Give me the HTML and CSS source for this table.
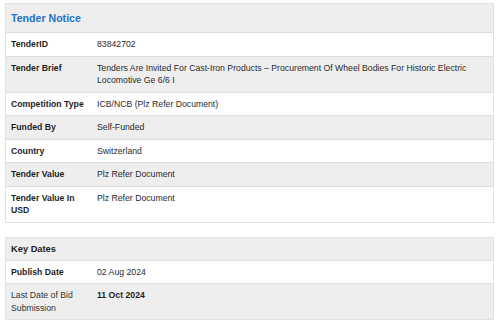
FILE: index.html
```html
<!DOCTYPE html>
<html>
<head>
<meta charset="utf-8">
<link rel="stylesheet" href="styles.css">
</head>
<body>
<div class="card">
  <div class="card-head title">Tender Notice</div>
  <div class="row"><div class="label">TenderID</div><div class="value">83842702</div></div>
  <div class="row alt"><div class="label">Tender Brief</div><div class="value">Tenders Are Invited For Cast-Iron Products – Procurement Of Wheel Bodies For Historic Electric Locomotive Ge 6/6 I</div></div>
  <div class="row"><div class="label">Competition Type</div><div class="value">ICB/NCB (Plz Refer Document)</div></div>
  <div class="row alt"><div class="label">Funded By</div><div class="value">Self-Funded</div></div>
  <div class="row"><div class="label">Country</div><div class="value">Switzerland</div></div>
  <div class="row alt"><div class="label">Tender Value</div><div class="value">Plz Refer Document</div></div>
  <div class="row"><div class="label">Tender Value In USD</div><div class="value">Plz Refer Document</div></div>
</div>
<div class="card second">
  <div class="card-head sub">Key Dates</div>
  <div class="row"><div class="label">Publish Date</div><div class="value">02 Aug 2024</div></div>
  <div class="row alt"><div class="label plain">Last Date of Bid Submission</div><div class="value strong">11 Oct 2024</div></div>
</div>
</body>
</html>
```
FILE: styles.css
```css
body {
  margin: 0;
  padding: 3px 6px 0 5px;
  font-family: "Liberation Sans", Arial, sans-serif;
  color: #222;
  background: #fff;
}
.card {
  border: 1px solid #e2e2e2;
  background: #fff;
}
.card.second {
  margin-top: 14px;
}
.card-head {
  background: #eeeeee;
  border-bottom: 1px solid #dddddd;
  padding: 0 5px;
  display: flex;
  align-items: center;
}
.title {
  height: 28px;
  color: #1a73c4;
  font-weight: bold;
  font-size: 10.6px;
}
.sub {
  height: 22px;
  color: #222;
  font-weight: bold;
  font-size: 9.3px;
}
.row {
  display: grid;
  grid-template-columns: 86px 1fr;
  border-bottom: 1px solid #dddddd;
  font-size: 8.7px;
  line-height: 12.5px;
}
.row:last-child {
  border-bottom: none;
}
.row.alt {
  background: #eeeeee;
}
.label {
  padding: 5px 5px 5px 5px;
  font-weight: bold;
  color: #1e1e1e;
}
.label.plain {
  font-weight: normal;
  color: #333;
}
.value {
  padding: 5px 10px 5px 5px;
  color: #2a2a2a;
}
.value.strong {
  font-weight: bold;
  color: #1e1e1e;
}
```
